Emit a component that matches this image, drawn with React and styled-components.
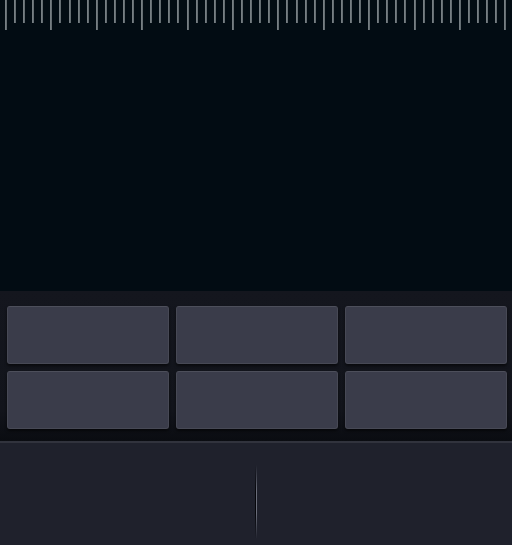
import React from 'react';
import styled, {createGlobalStyle} from 'styled-components';

const GlobalStyle = createGlobalStyle`
  html, body {
    margin: 0;
    padding: 0;
    background: #1f212c;
    font-family: "Liberation Sans", Arial, sans-serif;
  }
`;

const Device = styled.div`
  width: 512px;
  height: 545px;
  display: flex;
  flex-direction: column;
  overflow: hidden;
`;

const Display = styled.div`
  height: 291px;
  background: #020c13;
  display: flex;
  flex-direction: column;
`;

const Ruler = styled.div`
  display: flex;
  justify-content: space-between;
  align-items: flex-start;
  padding: 0 5px;
`;

const Tick = styled.div`
  width: 2px;
  height: ${props => (props.major ? '30px' : '23px')};
  background: linear-gradient(to right, #7f878b, #5c656a);
`;

const Pad = styled.div`
  height: 150px;
  box-sizing: border-box;
  padding: 15px 5px 12px 7px;
  background: linear-gradient(to bottom, #14161e 0%, #12141b 80%, #0a0c11 100%);
  display: grid;
  grid-template-columns: repeat(3, 1fr);
  grid-template-rows: repeat(2, 1fr);
  gap: 7px;
`;

const Key = styled.button`
  margin: 0;
  padding: 0;
  border: 1px solid #474955;
  border-top-color: #4d4f5b;
  border-radius: 3px;
  background: #3a3c4a;
  box-shadow: 0 2px 3px rgba(0, 0, 0, 0.55);
  cursor: pointer;
`;

const Footer = styled.div`
  flex: 1;
  background: #1f212c;
  border-top: 2px solid #31333d;
  display: flex;
  justify-content: center;
  padding-top: 22px;
`;

const Divider = styled.div`
  width: 2px;
  height: 74px;
  background:
    linear-gradient(to bottom, rgba(31,33,44,1) 0%, rgba(31,33,44,0) 35%, rgba(31,33,44,0) 65%, rgba(31,33,44,1) 100%),
    linear-gradient(to right, #05060a 50%, #6a6d7a 50%);
`;

export default function App() {
    const ticks = [];
    for (let i = 0; i < 56; i++) {
        ticks.push(<Tick key={i} major={i % 5 === 0} />);
    }
    const keys = [0, 1, 2, 3, 4, 5];

    return (
        <Device>
            <GlobalStyle />
            <Display>
                <Ruler>{ticks}</Ruler>
            </Display>
            <Pad>
                {keys.map(k => <Key key={k} />)}
            </Pad>
            <Footer>
                <Divider />
            </Footer>
        </Device>
    );
}
